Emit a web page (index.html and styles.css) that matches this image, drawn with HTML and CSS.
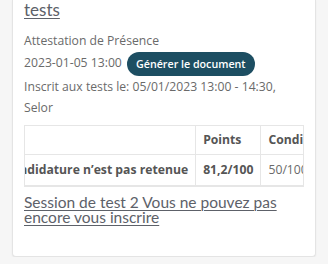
FILE: index.html
```html
<!DOCTYPE html>
<html lang="fr">
<head>
    <meta charset="UTF-8" />
    <meta name="viewport" content="width=device-width, initial-scale=1.0">
    <title>Sessions de test</title>
    <link rel="stylesheet" href="styles.css">
</head>
<body>
    <div class="card">
        <a class="session-title first-session" href="#">tests</a>

        <div class="session-info">
            <p>Attestation de Présence</p>
            <p class="doc-line">2023-01-05 13:00 <button class="doc-button">Générer le document</button></p>
            <p>Inscrit aux tests le: 05/01/2023 13:00 - 14:30,</p>
            <p>Selor</p>
        </div>

        <div class="table-wrap" id="table-wrap">
            <table class="results">
                <tr>
                    <th></th>
                    <th id="col-points">Points</th>
                    <th>Conditions</th>
                </tr>
                <tr>
                    <td class="strong">Votre candidature n’est pas retenue</td>
                    <td class="strong">81,2/100</td>
                    <td>50/100</td>
                </tr>
            </table>
        </div>

        <a class="session-title next-session" href="#">Session de test 2 Vous ne pouvez pas encore vous inscrire</a>
    </div>

    <script>
        // le tableau est défilé horizontalement (vue mobile)
        var wrap = document.getElementById('table-wrap');
        var points = document.getElementById('col-points');
        wrap.scrollLeft = points.offsetLeft - 170;
    </script>
</body>
</html>
```

FILE: styles.css
```css
body {
    margin: 0;
    padding: 0 12px;
    background-color: #f6f6f6;
    font-family: 'Open Sans', Arial, sans-serif;
    color: #6a6a6a;
}

.card {
    background-color: #fff;
    border: 1px solid #e4e4e4;
    border-top: none;
    border-radius: 0 0 4px 4px;
    box-shadow: 0 1px 2px rgba(0, 0, 0, 0.06);
    padding: 0 11px 31px;
}

.session-title {
    display: block;
    font-family: Lato, 'Liberation Sans', sans-serif;
    font-size: 15.5px;
    line-height: 15px;
    color: #5d6169;
    text-decoration: underline;
    text-underline-offset: 2px;
    text-decoration-thickness: 1px;
}

.first-session {
    font-size: 17px;
    padding-top: 2px;
}

.session-info {
    margin-top: 13px;
    font-size: 12.2px;
}

.session-info p {
    margin: 0;
    line-height: 21px;
}

.session-info .doc-line {
    line-height: 24px;
}

.doc-button {
    height: 24px;
    margin-left: 2px;
    padding: 0 9px;
    border: none;
    border-radius: 12px;
    background-color: #1d4e62;
    color: #fff;
    font-family: 'Open Sans', Arial, sans-serif;
    font-size: 10.7px;
    font-weight: 600;
    vertical-align: middle;
}

.table-wrap {
    margin-top: 7px;
    border: 1px solid #e6e6e6;
    border-top: none;
    overflow-x: auto;
    scrollbar-width: none;
}

.results {
    border-collapse: collapse;
    font-size: 12.2px;
    white-space: nowrap;
}

.results th,
.results td {
    border: 1px solid #e6e6e6;
    padding: 0 7px;
    text-align: left;
}

.results th {
    height: 28px;
    color: #555;
    font-weight: 700;
}

.results td {
    height: 30px;
}

.strong {
    font-weight: 700;
    color: #555;
}

.next-session {
    margin-top: 8px;
}
```
